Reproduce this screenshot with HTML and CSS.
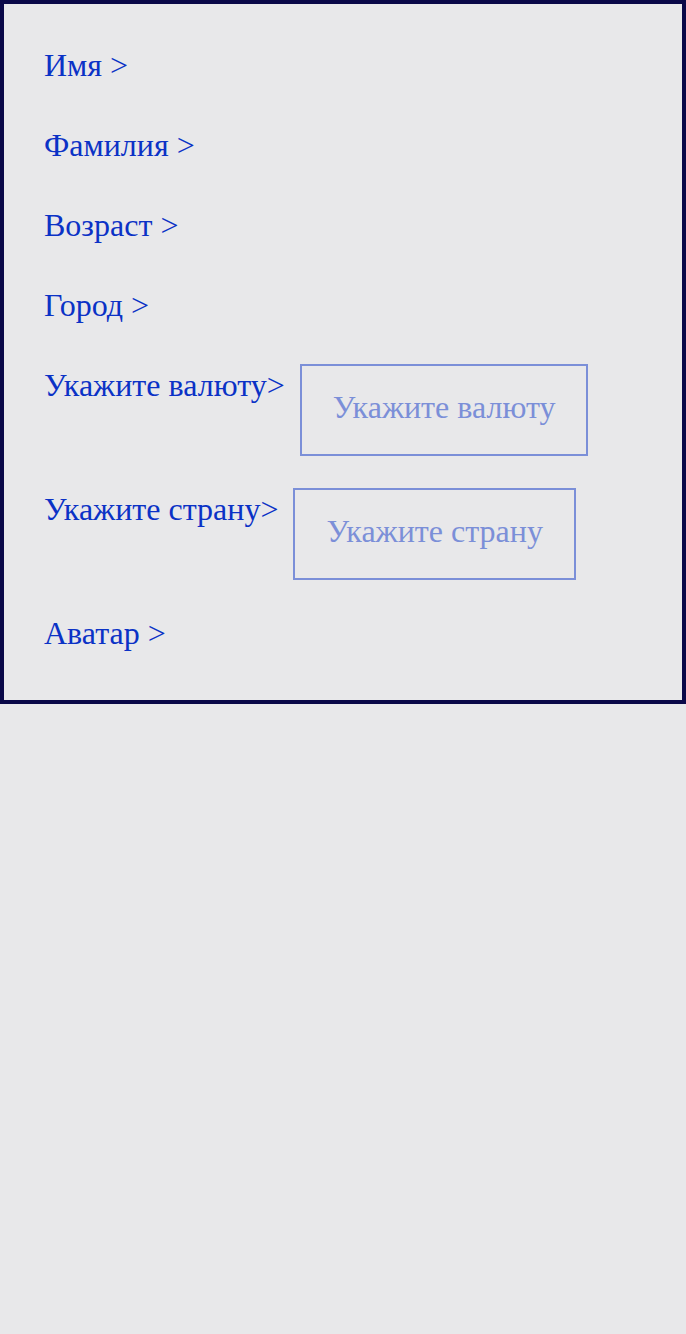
FILE: index.html
```html
<!DOCTYPE html>
<html lang="ru">
<head>
<meta charset="utf-8">
<link rel="stylesheet" href="styles.css">
</head>
<body>
<div class="panel">
  <div class="row">Имя &gt;</div>
  <div class="row">Фамилия &gt;</div>
  <div class="row">Возраст &gt;</div>
  <div class="row">Город &gt;</div>
  <div class="row input-row">
    <span class="label">Укажите валюту&gt;</span>
    <div class="field">Укажите валюту</div>
  </div>
  <div class="row input-row">
    <span class="label">Укажите страну&gt;</span>
    <div class="field">Укажите страну</div>
  </div>
  <div class="row last">Аватар &gt;</div>
</div>
</body>
</html>
```

FILE: styles.css
```css
html, body {
  margin: 0;
  padding: 0;
  background: #e8e8ea;
}
body {
  width: 686px;
  min-height: 1334px;
  font-family: "Liberation Serif", "Times New Roman", serif;
}
.panel {
  border: 4px solid #0a0848;
  padding: 40px 40px 48px 40px;
  display: flex;
  flex-direction: column;
  align-items: flex-start;
}
.row {
  font-size: 32px;
  line-height: 42px;
  height: 40px;
  color: #0b32c6;
  margin-bottom: 40px;
}
.row.last {
  margin-bottom: 0;
}
.input-row {
  display: flex;
  align-items: flex-start;
  gap: 15px;
  height: auto;
  margin-bottom: 32px;
}
.label {
  line-height: 42px;
}
.field {
  border: 2px solid #7b8fd8;
  padding: 1px 31px 7px 31px;
  height: 80px;
  line-height: 80px;
  color: #7b8fd8;
  font-size: 32px;
}
```
